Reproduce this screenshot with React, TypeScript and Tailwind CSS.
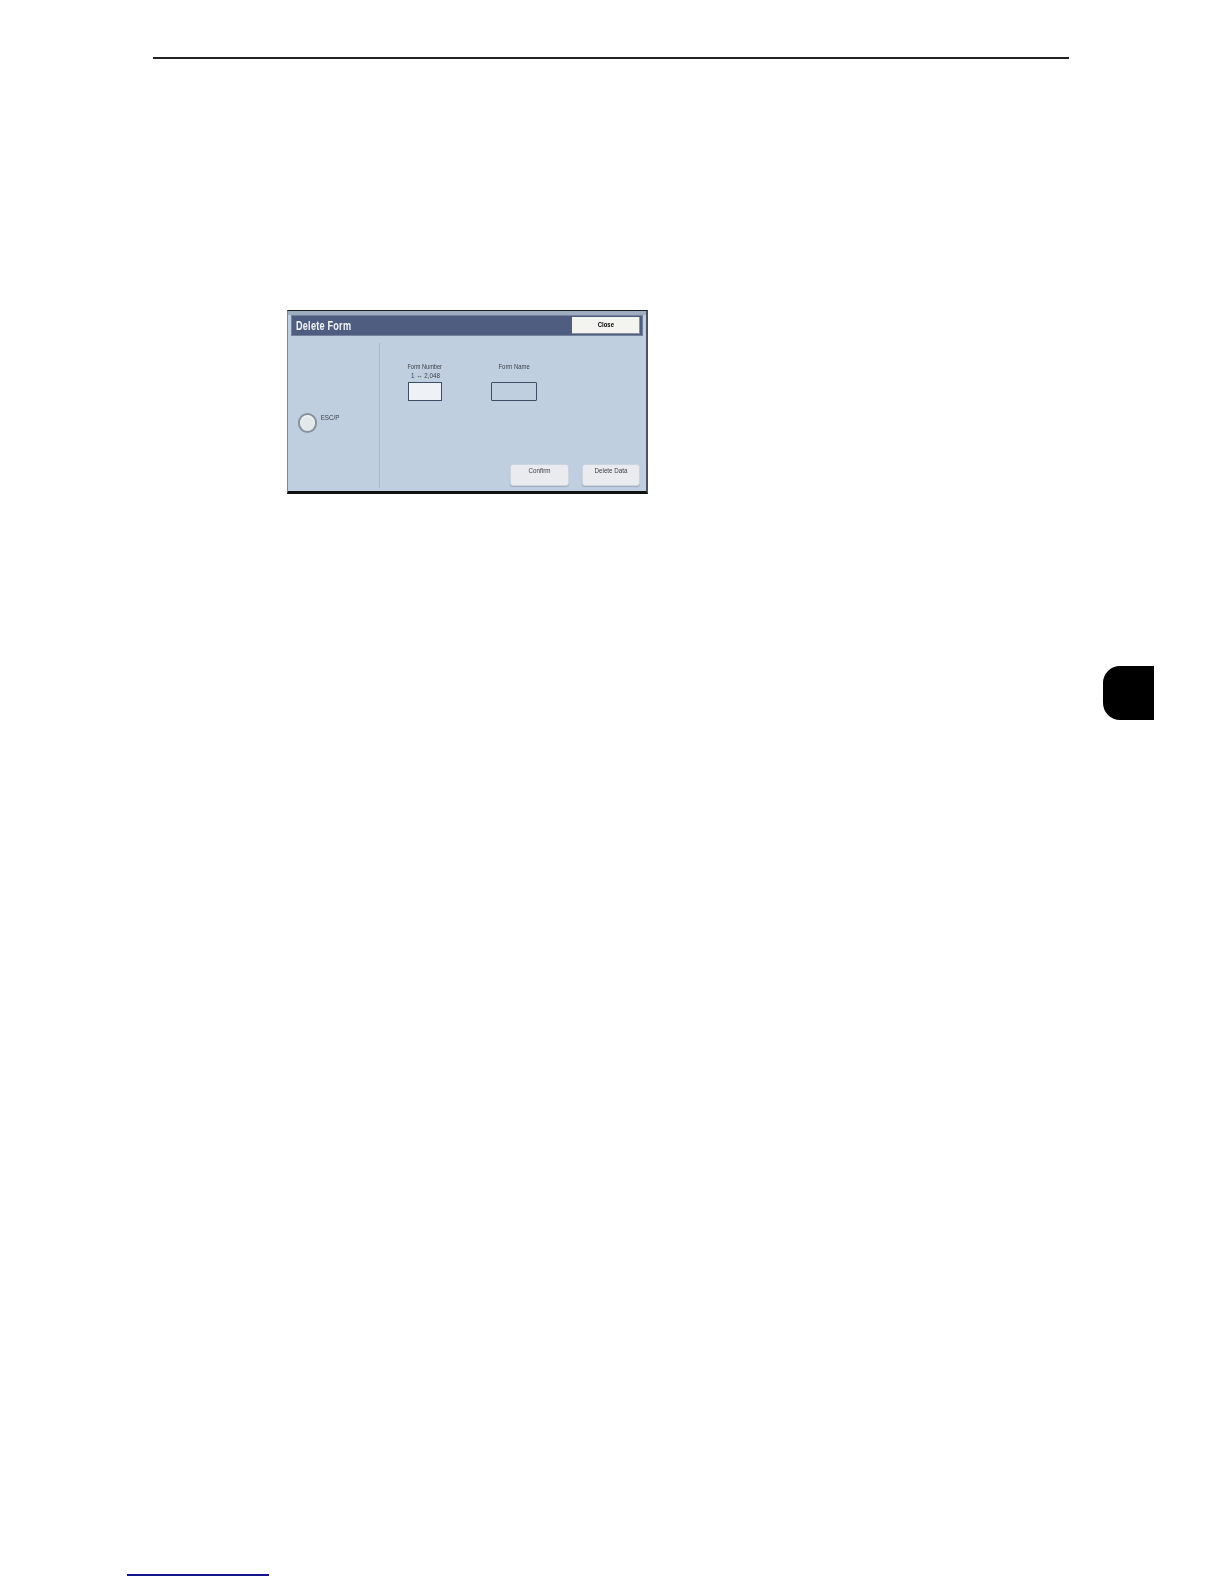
const labelFont = "font-['Liberation_Sans',sans-serif]";

const SmallLabel = ({ children, squeeze = "scale-x-[.78]" }: { children: React.ReactNode; squeeze?: string }) => (
  <div className={`${labelFont} ${squeeze} text-[8px] leading-[9px] text-[#3d4048] text-center whitespace-nowrap`}>
    {children}
  </div>
);

const DimButton = ({ label, width }: { label: string; width: string }) => (
  <div className={`${width} h-[22px] rounded-[3px] bg-[#e9ebee] border border-[#ccd5df] shadow-[0_1px_1px_#9fadbf] pt-[1px]`}>
    <SmallLabel>{label}</SmallLabel>
  </div>
);

const DeleteFormDialog = () => (
  <div className="w-[361px] h-[184px] ml-[287px] mt-[251px] border-t border-t-[#1c1c1c] border-b-[3px] border-b-[#111] border-l border-l-[#7d8794] border-r-2 border-r-[#4a5260] bg-[#bfcfe0] flex flex-col blur-[0.3px]">
    <div className="h-[4px] bg-[#9fadc0]" />
    <div className="h-[21px] mx-[3px] bg-[#4f5e80] border border-[#76839c] flex items-center justify-between pl-[4px] pr-[2px]">
      <span className={`${labelFont} text-[12px] font-bold text-[#f2f4f8] tracking-[0.3px] scale-x-[.76] origin-left whitespace-nowrap`}>
        Delete Form
      </span>
      <div className="w-[68px] h-[17px] bg-[#f3f3ef] border-b border-r border-[#8b93a3] flex items-center justify-center">
        <span className={`${labelFont} text-[8px] font-bold text-black scale-x-[.74] ml-[1px]`}>Close</span>
      </div>
    </div>
    <div className="flex-1 flex pt-[7px]">
      <div className="w-[92px] border-r border-[#a9b8ca] flex items-start pl-[10px] pt-[70px] gap-[1px] mb-[3px]">
        <div className="w-[19px] h-[20px] rounded-full bg-[#e3e8ea] border-[2px] border-[#87929c] shadow-[inset_0_1px_2px_white]" />
        <div>
          <SmallLabel>ESC/P</SmallLabel>
        </div>
      </div>
      <div className="flex-1 flex flex-col pt-[19px] pr-[6px] pb-[5px]">
        <div className="flex items-start">
          <div className="w-[34px] ml-[28px] flex flex-col items-center">
            <SmallLabel squeeze="scale-x-[.7]">Form Number</SmallLabel>
            <SmallLabel>1 ↔ 2,048</SmallLabel>
            <div className="w-[34px] h-[19px] mt-[2px] bg-[#eef1f5] border border-[#3c4e66]" />
          </div>
          <div className="w-[46px] ml-[49px] flex flex-col items-center">
            <SmallLabel squeeze="scale-x-[.74]">Form Name</SmallLabel>
            <div className="w-[46px] h-[19px] mt-[11px] bg-[#bfcfe0] border border-[#3c4e66] rounded-[1px]" />
          </div>
        </div>
        <div className="mt-auto flex justify-end gap-[13px]">
          <DimButton label="Confirm" width="w-[59px]" />
          <DimButton label="Delete Data" width="w-[58px]" />
        </div>
      </div>
    </div>
  </div>
);

export default function App() {
  return (
    <div className="w-[1224px] h-[1584px] bg-white flex flex-col overflow-hidden">
      <div className="h-[2px] mt-[57px] ml-[153px] w-[916px] bg-[#222]" />
      <DeleteFormDialog />
      <div className="w-[51px] h-[54px] ml-[1103px] mt-[172px] bg-black rounded-l-[17px]" />
      <div className="w-[142px] h-[2px] ml-[127px] mt-[854px] bg-[#14148c]" />
    </div>
  );
}
